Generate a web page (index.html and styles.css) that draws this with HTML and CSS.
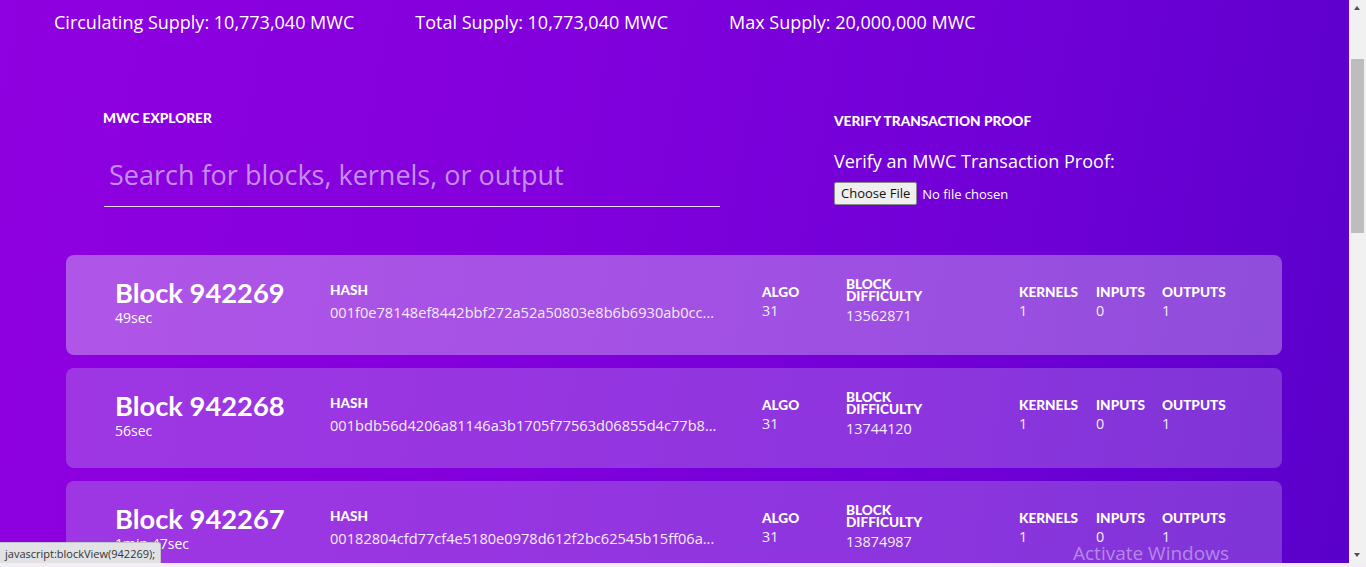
FILE: index.html
```html
<!DOCTYPE html>
<html lang="en">
<head>
<meta charset="utf-8">
<title>MWC Explorer</title>
<link rel="stylesheet" href="styles.css">
</head>
<body>
<div class="viewport">
  <main class="page">
    <div class="supply">
      <span>Circulating Supply: 10,773,040 MWC</span>
      <span>Total Supply: 10,773,040 MWC</span>
      <span>Max Supply: 20,000,000 MWC</span>
    </div>

    <section class="tools">
      <div class="tool-search">
        <h2 class="tool-title">MWC EXPLORER</h2>
        <input class="search" type="text" placeholder="Search for blocks, kernels, or output">
      </div>
      <div class="tool-verify">
        <h2 class="tool-title verify-title">VERIFY TRANSACTION PROOF</h2>
        <p class="verify-label">Verify an MWC Transaction Proof:</p>
        <div class="file-row"><span class="file-btn">Choose File</span><span class="file-none">No file chosen</span></div>
      </div>
    </section>

    <section class="blocks">
      <a class="card card-hover" href="#">
        <div class="c-block"><div class="b-title">Block 942269</div><div class="b-time">49sec</div></div>
        <div class="c-col"><div class="lbl">HASH</div><div class="val hash">001f0e78148ef8442bbf272a52a50803e8b6b6930ab0cc...</div></div>
        <div class="c-col"><div class="lbl">ALGO</div><div class="val">31</div></div>
        <div class="c-col"><div class="lbl lbl2">BLOCK<br>DIFFICULTY</div><div class="val diff">13562871</div></div>
        <div class="c-col"><div class="lbl">KERNELS</div><div class="val">1</div></div>
        <div class="c-col"><div class="lbl">INPUTS</div><div class="val">0</div></div>
        <div class="c-col"><div class="lbl">OUTPUTS</div><div class="val">1</div></div>
      </a>
      <a class="card" href="#">
        <div class="c-block"><div class="b-title">Block 942268</div><div class="b-time">56sec</div></div>
        <div class="c-col"><div class="lbl">HASH</div><div class="val hash">001bdb56d4206a81146a3b1705f77563d06855d4c77b8...</div></div>
        <div class="c-col"><div class="lbl">ALGO</div><div class="val">31</div></div>
        <div class="c-col"><div class="lbl lbl2">BLOCK<br>DIFFICULTY</div><div class="val diff">13744120</div></div>
        <div class="c-col"><div class="lbl">KERNELS</div><div class="val">1</div></div>
        <div class="c-col"><div class="lbl">INPUTS</div><div class="val">0</div></div>
        <div class="c-col"><div class="lbl">OUTPUTS</div><div class="val">1</div></div>
      </a>
      <a class="card" href="#">
        <div class="c-block"><div class="b-title">Block 942267</div><div class="b-time">1min 47sec</div></div>
        <div class="c-col"><div class="lbl">HASH</div><div class="val hash">00182804cfd77cf4e5180e0978d612f2bc62545b15ff06a...</div></div>
        <div class="c-col"><div class="lbl">ALGO</div><div class="val">31</div></div>
        <div class="c-col"><div class="lbl lbl2">BLOCK<br>DIFFICULTY</div><div class="val diff">13874987</div></div>
        <div class="c-col"><div class="lbl">KERNELS</div><div class="val">1</div></div>
        <div class="c-col"><div class="lbl">INPUTS</div><div class="val">0</div></div>
        <div class="c-col"><div class="lbl">OUTPUTS</div><div class="val">1</div></div>
      </a>
    </section>

    <div class="watermark">Activate Windows</div>
    <div class="status-bubble">javascript:blockView(942269);</div>
  </main>
  <div class="scrollbar">
    <div class="sb-arrow sb-up"></div>
    <div class="sb-track"><div class="sb-thumb"></div></div>
    <div class="sb-arrow sb-down"></div>
  </div>
</div>
<div class="bottom-strip"></div>
</body>
</html>
```
FILE: styles.css
```css
* { box-sizing: border-box; }
html, body { margin: 0; padding: 0; }
body {
  width: 1366px;
  height: 567px;
  overflow: hidden;
  font-family: "Open Sans", "Noto Sans", sans-serif;
  color: #fff;
  background: #f3eef6;
}
.viewport {
  display: flex;
  height: 563px;
}
.page {
  position: relative;
  width: 1349px;
  height: 563px;
  overflow: hidden;
  background: linear-gradient(100deg, #9000e0 0%, #8200dd 40%, #6e00d6 75%, #5a00cb 100%);
}
.supply {
  display: flex;
  gap: 61px;
  padding: 10px 0 0 54px;
  font-size: 18px;
  line-height: 25px;
}
.tools {
  display: grid;
  grid-template-columns: 731px 1fr;
  padding: 0 0 0 103px;
  margin-top: 75px;
}
.tool-title {
  margin: 0;
  font-family: Lato, sans-serif;
  font-weight: 900;
  font-size: 13.7px;
  line-height: 16px;
}
.verify-title { margin-top: 3px; }
.search {
  display: block;
  margin-top: 27px;
  width: 616px;
  margin-left: 1px;
  height: 54px;
  padding: 0 5px 10px;
  border: 0;
  border-bottom: 1px solid #e8dcf6;
  background: transparent;
  color: #fff;
  font-family: "Open Sans", sans-serif;
  font-size: 27px;
  outline: none;
}
.search::placeholder { color: #c48ef0; }
.verify-label {
  margin: 20px 0 0;
  font-size: 18px;
  line-height: 24px;
}
.file-row {
  display: flex;
  align-items: center;
  gap: 5px;
  margin-top: 9px;
  font-size: 13px;
}
.file-btn {
  display: inline-block;
  background: #efefef;
  color: #111;
  border: 1px solid #8a8a8a;
  border-radius: 2px;
  padding: 1px 6px;
  line-height: 19px;
  font-size: 13px;
}
.file-none { color: #fff; }

.blocks {
  display: flex;
  flex-direction: column;
  gap: 13px;
  width: 1216px;
  margin: 48px 0 0 66px;
}
.card {
  display: grid;
  grid-template-columns: 215px 432px 84px 173px 77px 66px 1fr;
  align-items: center;
  height: 100px;
  flex: none;
  padding: 0 0 6px 49px;
  border-radius: 8px;
  background: linear-gradient(100deg, rgba(180,120,232,0.45), rgba(175,130,230,0.4));
  color: #fff;
  text-decoration: none;
}
.card-hover {
  background: linear-gradient(100deg, rgba(210,170,240,0.5), rgba(200,170,235,0.45));
}
.c-block { padding-top: 2px; }
.b-title {
  font-family: Lato, sans-serif;
  font-weight: 700;
  font-size: 27.3px;
  line-height: 28px;
}
.b-time {
  margin-top: 2px;
  font-size: 14px;
  line-height: 18px;
}
.lbl {
  font-family: Lato, sans-serif;
  font-weight: 900;
  font-size: 13.6px;
  line-height: 17px;
}
.lbl2 { line-height: 12px; }
.val {
  font-size: 14.4px;
  line-height: 20px;
  color: #f4ecfb;
}
.hash { margin-top: 3px; white-space: nowrap; font-size: 14.6px; }
.diff { margin-top: 4px; }

.watermark {
  position: absolute;
  left: 1073px;
  top: 540px;
  font-family: "Open Sans", sans-serif;
  font-size: 19px;
  color: rgba(255,255,255,0.42);
  line-height: 26px;
}
.status-bubble {
  position: absolute;
  left: 0;
  top: 542px;
  height: 21px;
  padding: 2px 5px 0 5px;
  background: #e2e2e4;
  border: 1px solid #c4c4c8;
  border-left: 0;
  border-bottom: 0;
  border-top-right-radius: 3px;
  color: #333;
  font-size: 11px;
  line-height: 17px;
}

.scrollbar {
  width: 17px;
  height: 563px;
  background: #f1f1f1;
  display: flex;
  flex-direction: column;
}
.sb-arrow {
  height: 17px;
  position: relative;
}
.sb-up::after, .sb-down::after {
  content: "";
  position: absolute;
  left: 5px;
  border-left: 3.5px solid transparent;
  border-right: 3.5px solid transparent;
}
.sb-up::after { top: 6px; border-bottom: 4px solid #505050; }
.sb-down::after { top: 7px; border-top: 4px solid #505050; }
.sb-track { flex: 1; padding: 42px 2px 0; }
.sb-thumb { height: 174px; background: #bdbdbd; }
.bottom-strip { height: 4px; background: #f3eef6; }
```
